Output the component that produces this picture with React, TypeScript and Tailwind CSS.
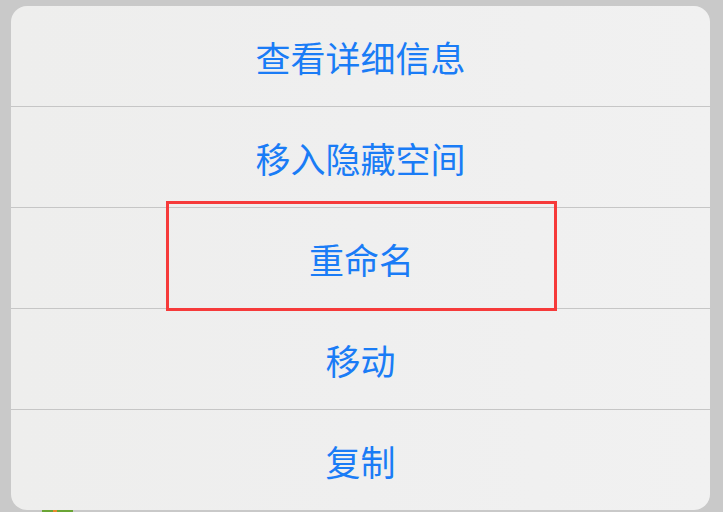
const actions = ["查看详细信息", "移入隐藏空间", "重命名", "移动", "复制"];

export default function App() {
  return (
    <div
      className="h-[512px] w-[723px] overflow-hidden bg-[#c9c9c9] pt-[6px]"
      style={{ fontFamily: '"Noto Sans CJK SC", "Noto Sans", sans-serif' }}
    >
      <div className="ml-[11px] w-[699px] overflow-hidden rounded-[16px] bg-gradient-to-r from-[#eeeeed] via-[#efefef] to-[#f1f1f1]">
        {actions.map((label, i) => (
          <div
            key={label}
            className={`flex h-[100px] items-center justify-center ${i > 0 ? "border-t border-[#c6c6c6] h-[101px]" : ""}`}
          >
            {label === "重命名" ? (
              <div className="mt-[-4px] flex h-[110px] w-[391px] translate-x-[1px] items-center justify-center border-[3px] border-[#f63a3a] pt-[4px]">
                <span className="text-[35px] leading-none text-[#1a7cf6]">{label}</span>
              </div>
            ) : (
              <span className="text-[35px] leading-none text-[#1a7cf6]">{label}</span>
            )}
          </div>
        ))}
      </div>

      <div className="mt-[0px] flex h-[20px] items-start">
        <div className="ml-[42px] flex h-[20px] w-[31px]">
          <div className="w-[11px] bg-[#6aa535]" />
          <div className="w-[4px] bg-[#e8892c]" />
          <div className="w-[16px] bg-[#6aa535]" />
        </div>
        <span className="ml-[48px] mt-[-1px] text-[20px] leading-none text-[#777]">2020-05-28 21:34</span>
        <span className="ml-auto mr-[70px] mt-[-1px] text-[20px] leading-none text-[#777]">1.26M</span>
      </div>
    </div>
  );
}
